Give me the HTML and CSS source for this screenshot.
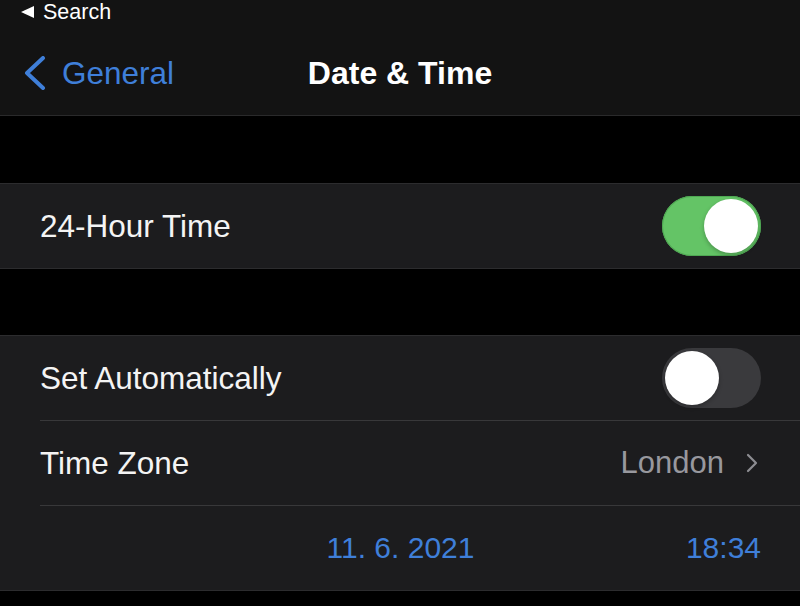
FILE: index.html
```html
<!DOCTYPE html>
<html>
<head>
<meta charset="utf-8">
<link rel="stylesheet" href="styles.css">
</head>
<body>
<div class="screen">
  <header class="header">
    <div class="statusbar">
      <svg class="tri" width="14" height="12" viewBox="0 0 14 12"><path d="M0 6 L13 0 L13 12 Z" fill="#fff"/></svg>
      <span>Search</span>
    </div>
    <nav class="nav">
      <div class="back">
        <svg width="24" height="34" viewBox="0 0 24 34"><path d="M20 2 L4 17 L20 32" fill="none" stroke="#3f7fd9" stroke-width="4" stroke-linecap="round" stroke-linejoin="round"/></svg>
        <span>General</span>
      </div>
      <div class="title">Date &amp; Time</div>
      <div></div>
    </nav>
  </header>

  <section class="group first">
    <div class="row">
      <span class="label">24-Hour Time</span>
      <span class="toggle on"><span class="knob"></span></span>
    </div>
  </section>

  <section class="group second">
    <div class="row">
      <span class="label">Set Automatically</span>
      <span class="toggle off"><span class="knob"></span></span>
    </div>
    <div class="row link">
      <span class="label">Time Zone</span>
      <span class="value">London
        <svg class="chev" width="12" height="20" viewBox="0 0 12 20"><path d="M2 2 L10 10 L2 18" fill="none" stroke="#8d8d92" stroke-width="2.2" stroke-linecap="round" stroke-linejoin="round"/></svg>
      </span>
    </div>
    <div class="row datetime">
      <span></span>
      <span class="date">11. 6. 2021</span>
      <span class="time">18:34</span>
    </div>
  </section>
</div>
</body>
</html>
```

FILE: styles.css
```css
* { box-sizing: border-box; }
html, body {
  margin: 0;
  padding: 0;
  background: #000;
}
body {
  font-family: "Liberation Sans", Arial, sans-serif;
  color: #f4f4f4;
}
.screen {
  width: 800px;
  height: 606px;
  overflow: hidden;
  background: #000;
}
.header {
  height: 116px;
  background: #131313;
  border-bottom: 1px solid #2a2a2b;
}
.statusbar {
  height: 25px;
  display: flex;
  align-items: flex-start;
  padding-left: 21px;
  font-size: 21.5px;
  line-height: 25px;
  color: #fff;
}
.statusbar .tri {
  margin-top: 6px;
  margin-right: 8px;
}
.nav {
  margin-top: 15px;
  height: 66px;
  display: grid;
  grid-template-columns: 1fr auto 1fr;
  align-items: center;
}
.back {
  display: flex;
  align-items: center;
  padding-left: 23px;
  gap: 15px;
  color: #3f7fd9;
  font-size: 31.5px;
}
.title {
  font-size: 32px;
  font-weight: bold;
  color: #fff;
}
.group {
  background: #1c1c1e;
  border-top: 1px solid #2c2c2e;
  border-bottom: 1px solid #2c2c2e;
  padding-left: 40px;
}
.group.first { margin-top: 67px; }
.group.second { margin-top: 66px; }
.row {
  height: 84px;
  display: flex;
  align-items: center;
  justify-content: space-between;
  padding-right: 39px;
  font-size: 31.5px;
}
.row + .row {
  border-top: 1px solid #38383a;
  height: 85px;
}
.label { color: #f4f4f4; }
.toggle {
  width: 99px;
  height: 60px;
  border-radius: 30px;
  display: flex;
  align-items: center;
  padding: 0 3px;
}
.toggle.on {
  background: #64c466;
  justify-content: flex-end;
  box-shadow: inset 0 0 0 1px #4fa853;
}
.toggle.off {
  background: #3a3a3d;
  justify-content: flex-start;
}
.knob {
  width: 54px;
  height: 54px;
  border-radius: 50%;
  background: #fff;
  box-shadow: 0 2px 4px rgba(0,0,0,0.25);
}
.row.link { padding-right: 42px; }
.value {
  display: flex;
  align-items: center;
  gap: 22px;
  color: #98989e;
  font-size: 31px;
}
.row.datetime {
  display: grid;
  grid-template-columns: 1fr auto 1fr;
  font-size: 30px;
  color: #3f7fd9;
}
.time { justify-self: end; }
```
